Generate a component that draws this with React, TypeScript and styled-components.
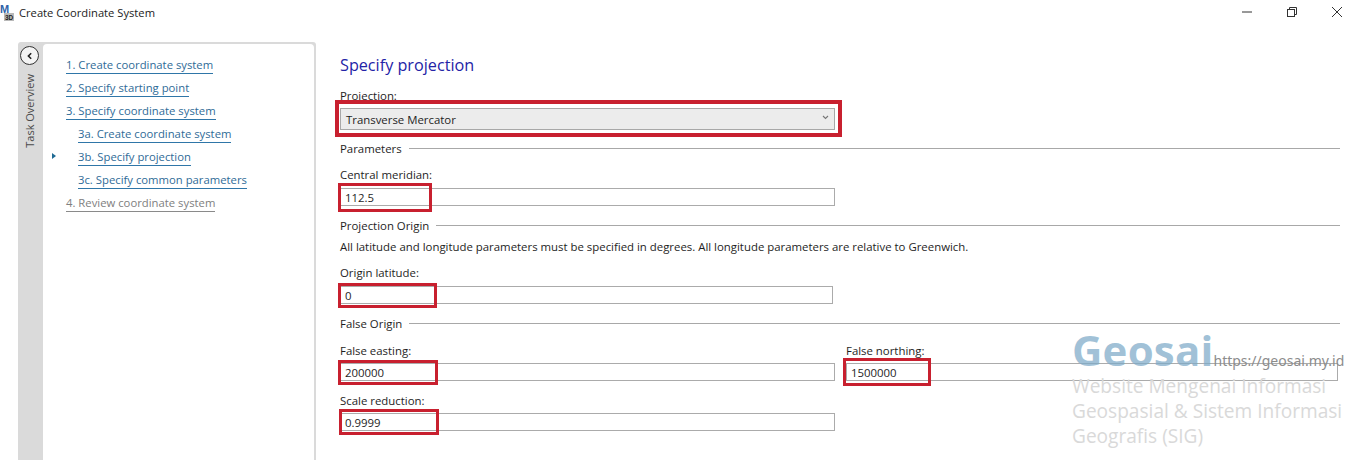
import React from "react"
import styled, { createGlobalStyle } from "styled-components"

const GlobalStyle = createGlobalStyle`
  html, body {
    margin: 0;
    padding: 0;
    background: #ffffff;
    overflow: hidden;
  }
  body {
    font-family: "Open Sans", "Noto Sans", sans-serif;
    font-size: 11.4px;
    color: #1e1e1e;
  }
`

const Page = styled.div`
  position: relative;
  width: 1352px;
  height: 460px;
  overflow: hidden;
`

const TitleBar = styled.div`
  display: flex;
  align-items: center;
  height: 24px;
`

const Title = styled.span`
  margin-left: 3px;
  font-size: 11.2px;
  color: #222222;
`

const WindowButtons = styled.div`
  display: flex;
  margin-left: auto;
  margin-right: -7px;
`

const WindowButton = styled.div`
  display: flex;
  align-items: center;
  justify-content: center;
  width: 45px;
  height: 20px;
`

const Body = styled.div`
  display: flex;
  height: 436px;
  padding-top: 18px;
  box-sizing: border-box;
`

const Sidebar = styled.div`
  display: flex;
  flex: none;
  width: 298px;
  margin-left: 18px;
  background: #dadada;
  border-radius: 3px 3px 0 0;
  padding-top: 2px;
  padding-right: 2px;
  box-sizing: border-box;
`

const Rail = styled.div`
  display: flex;
  flex-direction: column;
  align-items: center;
  flex: none;
  width: 25px;
`

const BackButton = styled.div`
  display: flex;
  align-items: center;
  justify-content: center;
  width: 19px;
  height: 19px;
  margin-top: 2px;
  margin-right: 2px;
  box-sizing: border-box;
  border: 1.5px solid #333333;
  border-radius: 50%;
  background: #f4f4f4;
`

const RailLabel = styled.div`
  margin-top: 9px;
  margin-right: 2px;
  writing-mode: vertical-rl;
  transform: rotate(180deg);
  font-size: 11px;
  color: #4a4a4a;
`

const TaskPanel = styled.div`
  display: flex;
  flex-direction: column;
  align-items: flex-start;
  flex: 1;
  padding: 13px 0 0 23px;
  background: #ffffff;
  border-radius: 4px 4px 0 0;
`

const TaskRow = styled.div<{ $sub?: boolean }>`
  position: relative;
  display: flex;
  height: 23px;
  margin-left: ${({ $sub }) => ($sub ? "12px" : "0")};
`

const TaskLink = styled.span<{ $disabled?: boolean }>`
  height: 16px;
  line-height: 16px;
  font-size: 11.3px;
  color: ${({ $disabled }) => ($disabled ? "#808080" : "#2f6b97")};
  border-bottom: 1px solid ${({ $disabled }) => ($disabled ? "#8a8a8a" : "#2f76a8")};
`

const CurrentMarker = styled.span`
  position: absolute;
  left: -26px;
  top: 4px;
  width: 0;
  height: 0;
  border-left: 4px solid #1f6a94;
  border-top: 3.5px solid transparent;
  border-bottom: 3.5px solid transparent;
`

const Main = styled.div`
  display: flex;
  flex-direction: column;
  flex: 1;
  padding: 9px 12px 0 24px;
  min-width: 0;
`

const Heading = styled.h1`
  margin: 0;
  height: 28px;
  line-height: 28px;
  font-size: 16.2px;
  font-weight: 400;
  color: #2323a6;
`

const Label = styled.div<{ $top: number }>`
  height: 17px;
  line-height: 15px;
  margin-top: ${({ $top }) => $top}px;
`

const Field = styled.div<{ $width: number; $top?: number }>`
  position: relative;
  flex: none;
  width: ${({ $width }) => $width}px;
  margin-top: ${({ $top }) => $top ?? 0}px;
`

const Select = styled.div`
  display: flex;
  align-items: center;
  justify-content: space-between;
  height: 22px;
  margin-top: 3px;
  padding: 0 5px 0 5px;
  box-sizing: border-box;
  border: 1px solid #a8a8a8;
  background: #ececec;
`

const SelectArrow = styled.svg`
  margin-bottom: 3px;
`

const Input = styled.div`
  height: 18px;
  line-height: 17px;
  padding-left: 4px;
  box-sizing: border-box;
  border: 1px solid #ababab;
  background: #ffffff;
`

const Highlight = styled.div<{ $l: number; $t: number; $w: number; $h: number; $b?: number }>`
  position: absolute;
  left: ${({ $l }) => $l}px;
  top: ${({ $t }) => $t}px;
  width: ${({ $w }) => $w}px;
  height: ${({ $h }) => $h}px;
  box-sizing: border-box;
  border: ${({ $b }) => $b ?? 3}px solid #c8202f;
  pointer-events: none;
`

const GroupTitle = styled.div<{ $top: number }>`
  display: flex;
  align-items: center;
  gap: 7px;
  height: 17px;
  margin-top: ${({ $top }) => $top}px;
  &::after {
    content: "";
    flex: 1;
    height: 1px;
    background: #a8a8a8;
  }
`

const Note = styled.div`
  height: 17px;
  line-height: 15px;
  margin-top: 5px;
  white-space: nowrap;
`

const Row = styled.div`
  display: flex;
  gap: 11px;
`

const Watermark = styled.div`
  position: absolute;
  left: 1072px;
  top: 327px;
  width: 280px;
  pointer-events: none;
`

const BrandLine = styled.div`
  display: flex;
  align-items: baseline;
  height: 47px;
  white-space: nowrap;
`

const Brand = styled.span`
  font-size: 42px;
  line-height: 46px;
  font-weight: 700;
  color: rgba(125, 170, 200, 0.72);
  letter-spacing: 0.2px;
`

const BrandUrl = styled.span`
  font-family: "Noto Sans", sans-serif;
  font-size: 14px;
  color: #8c8c8c;
`

const Tagline = styled.div`
  font-size: 19.1px;
  line-height: 25px;
  color: #d9d9d9;
  white-space: nowrap;
`

const tasks = [
  { text: "1. Create coordinate system" },
  { text: "2. Specify starting point" },
  { text: "3. Specify coordinate system" },
  { text: "3a. Create coordinate system", sub: true },
  { text: "3b. Specify projection", sub: true, current: true },
  { text: "3c. Specify common parameters", sub: true },
  { text: "4. Review coordinate system", disabled: true },
]

const AppIcon = () => (
  <svg width="16" height="18" viewBox="0 0 16 18">
    <rect x="4" y="10" width="10" height="8" fill="#b9b9b9" />
    <text x="0" y="10" fontFamily="Liberation Sans" fontSize="11" fontWeight="700" fill="#2f62a8">
      M
    </text>
    <text x="5" y="16.5" fontFamily="Liberation Sans" fontSize="6.5" fontWeight="700" fill="#222222">
      3D
    </text>
  </svg>
)

const App = () => (
  <Page>
    <GlobalStyle />
    <TitleBar>
      <AppIcon />
      <Title>Create Coordinate System</Title>
      <WindowButtons>
        <WindowButton>
          <svg width="12" height="12" viewBox="0 0 12 12">
            <path d="M1 6h10" stroke="#333" strokeWidth="1" />
          </svg>
        </WindowButton>
        <WindowButton>
          <svg width="12" height="12" viewBox="0 0 12 12" fill="none" stroke="#333">
            <rect x="1.5" y="3.5" width="7" height="7" />
            <path d="M3.5 3.5v-2h7v7h-2" />
          </svg>
        </WindowButton>
        <WindowButton>
          <svg width="12" height="12" viewBox="0 0 12 12">
            <path d="M1 1l10 10M11 1L1 11" stroke="#333" strokeWidth="1" />
          </svg>
        </WindowButton>
      </WindowButtons>
    </TitleBar>
    <Body>
      <Sidebar>
        <Rail>
          <BackButton>
            <svg width="8" height="8" viewBox="0 0 8 8" fill="none">
              <path d="M5.2 1.2L2.4 4l2.8 2.8" stroke="#222" strokeWidth="1.6" />
            </svg>
          </BackButton>
          <RailLabel>Task Overview</RailLabel>
        </Rail>
        <TaskPanel>
          {tasks.map((task) => (
            <TaskRow key={task.text} $sub={task.sub}>
              {task.current && <CurrentMarker />}
              <TaskLink $disabled={task.disabled}>{task.text}</TaskLink>
            </TaskRow>
          ))}
        </TaskPanel>
      </Sidebar>
      <Main>
        <Heading>Specify projection</Heading>
        <Label $top={9}>Projection:</Label>
        <Field $width={495}>
          <Select>
            Transverse Mercator
            <SelectArrow width="7" height="5" viewBox="0 0 7 5" fill="none">
              <path d="M1 1l2.5 2.5L6 1" stroke="#777" strokeWidth="1.1" />
            </SelectArrow>
          </Select>
          <Highlight $l={-5} $t={-5} $w={507} $h={37} $b={4} />
        </Field>
        <GroupTitle $top={10}>Parameters</GroupTitle>
        <Label $top={10}>Central meridian:</Label>
        <Field $width={495} $top={4}>
          <Input>112.5</Input>
          <Highlight $l={-2} $t={-5} $w={94} $h={29} />
        </Field>
        <GroupTitle $top={11}>Projection Origin</GroupTitle>
        <Note>All latitude and longitude parameters must be specified in degrees. All longitude parameters are relative to Greenwich.</Note>
        <Label $top={9}>Origin latitude:</Label>
        <Field $width={493} $top={4}>
          <Input>0</Input>
          <Highlight $l={-2} $t={-3} $w={99} $h={25} />
        </Field>
        <GroupTitle $top={11}>False Origin</GroupTitle>
        <Row>
          <div>
            <Label $top={11}>False easting:</Label>
            <Field $width={495} $top={3}>
              <Input>200000</Input>
              <Highlight $l={-2} $t={-3} $w={100} $h={25} />
            </Field>
          </div>
          <div>
            <Label $top={11}>False northing:</Label>
            <Field $width={492} $top={3}>
              <Input>1500000</Input>
              <Highlight $l={-3} $t={-5} $w={88} $h={28} />
            </Field>
          </div>
        </Row>
        <Label $top={12}>Scale reduction:</Label>
        <Field $width={495} $top={3}>
          <Input>0.9999</Input>
          <Highlight $l={-1} $t={-4} $w={100} $h={26} />
        </Field>
      </Main>
    </Body>
    <Watermark>
      <BrandLine>
        <Brand>Geosai</Brand>
        <BrandUrl>https://geosai.my.id</BrandUrl>
      </BrandLine>
      <Tagline>Website Mengenai Informasi</Tagline>
      <Tagline>Geospasial &amp; Sistem Informasi</Tagline>
      <Tagline>Geografis (SIG)</Tagline>
    </Watermark>
  </Page>
)

export default App
